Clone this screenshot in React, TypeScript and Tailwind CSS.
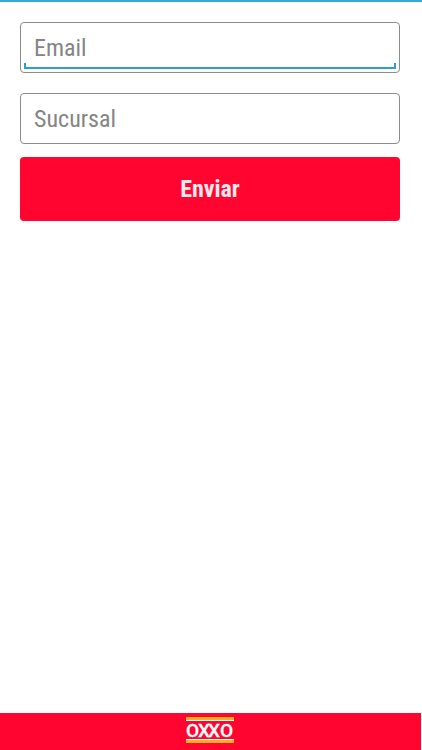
function OxxoLogo() {
  return (
    <svg viewBox="0 0 49 29" className="h-[29px] w-[49px]" role="img" aria-label="OXXO">
      <rect x="0" y="1" width="48" height="3" fill="#ffb01f" />
      <rect x="0" y="4" width="48" height="1" fill="#ffffff" />
      <text x="0 12 22 34" y="21" fontSize="19" fill="#fff" stroke="#fff" strokeWidth="0.3" className="font-['Roboto',sans-serif] font-medium">
        OXXO
      </text>
      <rect x="0" y="23" width="48" height="1" fill="#ffffff" />
      <rect x="0" y="24" width="48" height="3" fill="#ffb01f" />
    </svg>
  );
}

function Field({ label, type, focused = false }: { label: string; type: string; focused?: boolean }) {
  return (
    <div className="relative">
      <input
        type={type}
        aria-label={label}
        placeholder={label}
        className="block h-[51px] w-full rounded border border-[#8c8c8c] bg-white px-[13px] text-[24px] text-[#333] outline-none placeholder:text-[#858585]"
      />
      {focused && (
        <span className="pointer-events-none absolute inset-x-1 bottom-1 h-1.5 border-x-2 border-b-2 border-[#2a9fd0]" />
      )}
    </div>
  );
}

export default function App() {
  return (
    <div className="flex min-h-screen flex-col border-t-2 border-[#38a6d6] bg-white font-['Roboto_Condensed','Roboto',sans-serif]">
      <form className="flex-1 pt-5 pr-[22px] pl-5" onSubmit={(e) => e.preventDefault()}>
        <div className="flex flex-col gap-5">
          <Field label="Email" type="email" focused />
          <Field label="Sucursal" type="text" />
        </div>
        <button type="submit" className="mt-[13px] h-16 w-full rounded bg-[#ff0530] text-[24px] font-bold text-[#ffe9ec]">
          Enviar
        </button>
      </form>
      <footer className="mr-px flex h-[37px] items-start justify-center bg-[#ff0530] pt-[3px]">
        <OxxoLogo />
      </footer>
    </div>
  );
}
